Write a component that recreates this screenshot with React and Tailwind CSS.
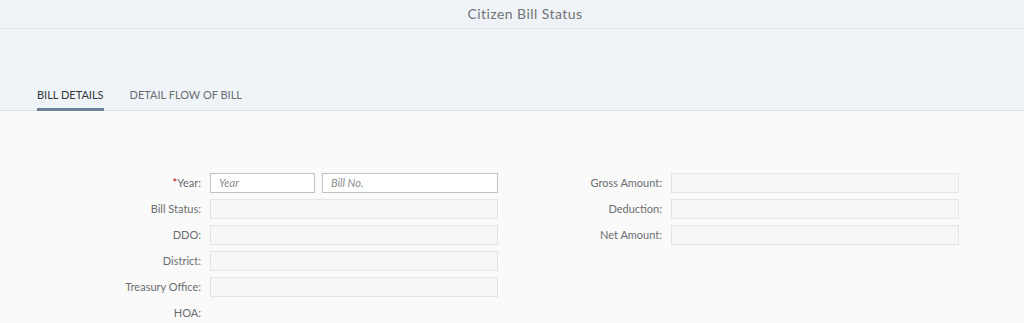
import React from "react";

const font = { fontFamily: "Lato, 'Open Sans', Arial, sans-serif" };

function Row({ label, req, labelW, children }) {
  return (
    <div className="flex items-center h-[20px] gap-[9px]">
      <div className="text-right text-[11px] text-[#6a6d70] shrink-0" style={{ width: labelW }}>
        {req && <span className="text-[#bb0000]">*</span>}
        {label}
      </div>
      {children}
    </div>
  );
}

function RO({ w = "w-[288px]" }) {
  return <div className={`${w} h-[20px] bg-[#f7f7f7] border border-[#e4e4e4]`} />;
}

export default function App() {
  return (
    <div className="w-[1024px] h-[323px] overflow-hidden bg-[#fafafa]" style={font}>
      <div className="h-[29px] bg-[#eff3f8] border-b border-[#dde4ec] flex items-center justify-center pl-[26px] pb-[2px] text-[14px] tracking-[0.45px] text-[#6f7276]">
        Citizen Bill Status
      </div>
      <div className="h-[82px] bg-[#eff4f9] border-b border-[#d9e0e8] flex items-end pl-[37px] gap-[26px]">
        <div className="relative h-[23px] text-[11px] text-[#32363a]">
          BILL DETAILS
          <div className="absolute left-0 right-0 bottom-[-1px] h-[3px] bg-[#6f8295]" />
        </div>
        <div className="h-[23px] text-[11px] text-[#6a6d70]">DETAIL FLOW OF BILL</div>
      </div>
      <div className="flex pt-[62px]">
        <div className="flex flex-col gap-[6px] w-[498px]">
          <Row label="Year:" req labelW="201px">
            <div className="flex gap-[7px]">
              <div className="w-[105px] h-[20px] bg-white border border-[#c2c2c2] flex items-center pl-[8px] text-[11px] italic text-[#8a8d90]">Year</div>
              <div className="w-[176px] h-[20px] bg-white border border-[#c2c2c2] flex items-center pl-[8px] text-[11px] italic text-[#8a8d90]">Bill No.</div>
            </div>
          </Row>
          <Row label="Bill Status:" labelW="201px"><RO /></Row>
          <Row label="DDO:" labelW="201px"><RO /></Row>
          <Row label="District:" labelW="201px"><RO /></Row>
          <Row label="Treasury Office:" labelW="201px"><RO /></Row>
          <Row label="HOA:" labelW="201px" />
        </div>
        <div className="flex flex-col gap-[6px]">
          <Row label="Gross Amount:" labelW="164px"><RO /></Row>
          <Row label="Deduction:" labelW="164px"><RO /></Row>
          <Row label="Net Amount:" labelW="164px"><RO /></Row>
        </div>
      </div>
    </div>
  );
}
